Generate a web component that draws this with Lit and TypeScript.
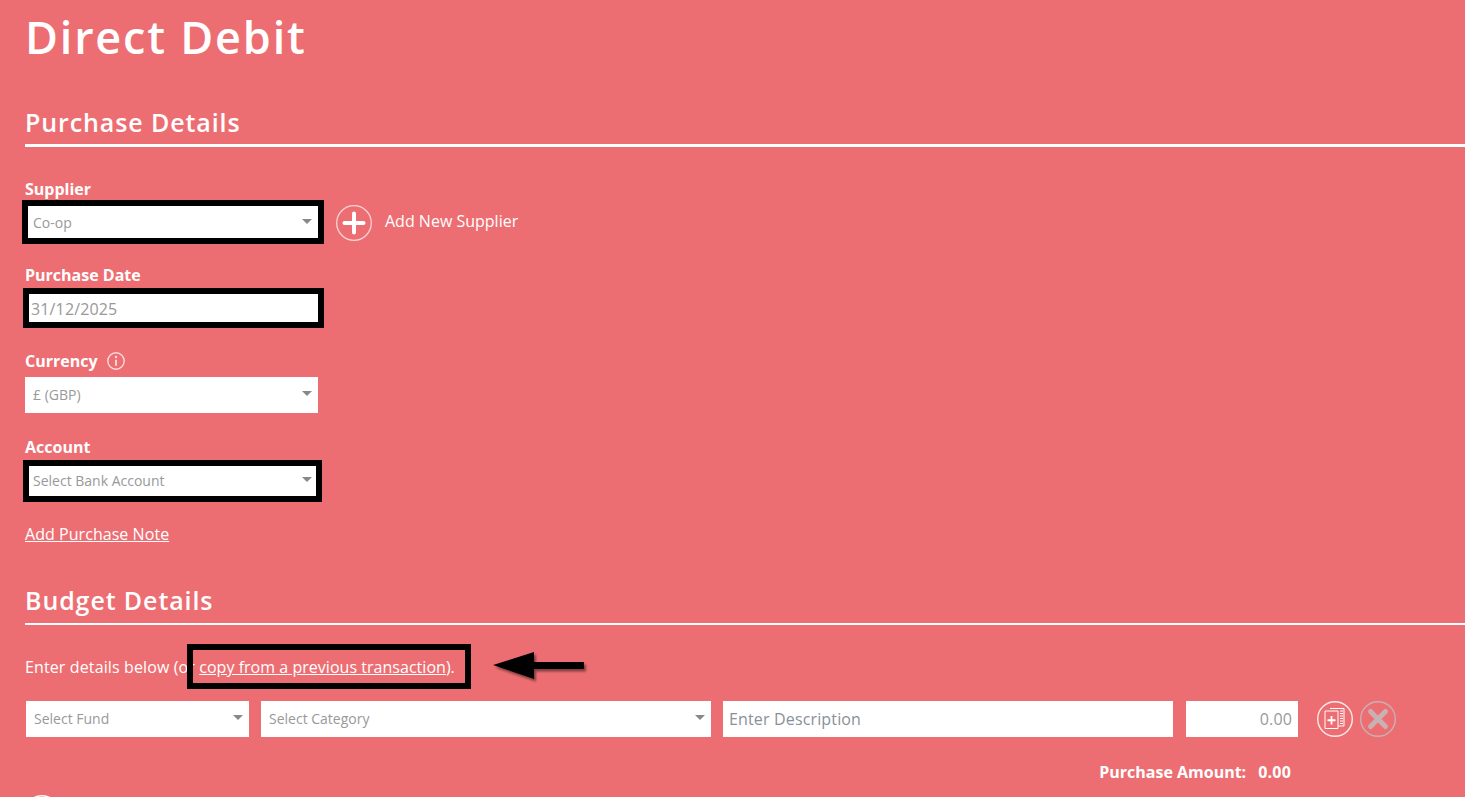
import { LitElement, html, css } from "lit";
import { customElement } from "lit/decorators.js";

@customElement("app-root")
export class AppRoot extends LitElement {
  static styles = css`
    :host { display: block; height: 797px; overflow: hidden; background: #ed6e72; color: #fff; font-family: "Open Sans", sans-serif; font-size: 16px; }
    .page { padding: 0 0 0 25px; position: relative; height: 797px; box-sizing: border-box; }
    h1 { margin: 0; padding-top: 6px; height: 83px; box-sizing: border-box; font-size: 45px; line-height: 61px; font-weight: 600; letter-spacing: 1.8px; }
    h2 { margin: 0; font-size: 25px; line-height: 33px; font-weight: 600; letter-spacing: 0.9px; }
    .purchase { padding-top: 23px; }
    .purchase h2 { padding-bottom: 5px; }
    .budget h2 { padding-bottom: 6px; }
    .rule { height: 3px; background: #fff; }
    .rule.thin { height: 2px; }
    .fields { display: flex; flex-direction: column; gap: 14px; padding-top: 31px; }
    .group { display: flex; flex-direction: column; height: 72px; }
    label { display: flex; align-items: center; gap: 9px; height: 22px; font-size: 16px; line-height: 22px; font-weight: 700; margin-bottom: 5px; }
    .row { display: flex; align-items: center; }
    .select, .input { position: relative; box-sizing: border-box; height: 36px; background: #fff; color: #999; display: flex; align-items: center; flex: none; }
    .select { font-size: 14px; padding: 0 0 2px 8px; }
    .select::after { content: ""; position: absolute; right: 6px; top: 14px; border-left: 5px solid transparent; border-right: 5px solid transparent; border-top: 5px solid #888; }
    .input { font-size: 16px; padding-left: 6px; letter-spacing: 0.15px; }
    .w293 { width: 293px; }
    .mark { position: absolute; border: 6px solid #000; pointer-events: none; box-sizing: border-box; }
    .m-supplier { left: -3px; right: -6px; top: -5px; bottom: -3px; }
    .m-date { left: -2px; right: -6px; top: -3px; bottom: -1px; }
    .m-account { left: -2px; right: -4px; top: -3px; bottom: -3px; }
    .add { display: flex; align-items: center; margin-left: 18px; gap: 13px; font-size: 16px; height: 36px; }
    .add span { position: relative; top: -2px; }
    .note { display: block; margin-top: 15px; font-size: 16px; line-height: 22px; color: #fff; text-decoration: underline; letter-spacing: 0.05px; }
    .budget { padding-top: 39px; }
    .intro { position: relative; margin-top: 31px; font-size: 16px; line-height: 22px; white-space: nowrap; height: 22px; }
    .intro .lead { letter-spacing: 0.12px; }
    .intro a { color: #fff; text-decoration: underline; letter-spacing: 0.03px; }
    .m-copy { left: 162px; top: -12px; width: 284px; height: 45px; }
    .arrow { position: absolute; left: 468px; top: -6px; overflow: visible; }
    .lines { display: flex; align-items: center; margin-top: 23px; margin-left: 1px; }
    .fund { width: 223px; }
    .cat { width: 450px; margin-left: 12px; }
    .desc { width: 450px; margin-left: 12px; color: #8a9098; }
    .amt { width: 112px; margin-left: 13px; justify-content: flex-end; padding: 0 6px 0 0; }
    .icons { display: flex; gap: 7px; margin-left: 19px; }
    .total { display: flex; justify-content: flex-end; width: 1266px; gap: 12px; margin-top: 24px; font-size: 16px; line-height: 22px; font-weight: 700; white-space: nowrap; }
    .total .val { letter-spacing: 0.2px; }
    .peek { position: absolute; left: 24px; top: 795px; }
    svg { display: block; flex: none; }
  `;

  render() {
    return html`<div class="page">
      <h1>Direct Debit</h1>
      <section class="purchase">
        <h2>Purchase Details</h2>
        <div class="rule"></div>
        <div class="fields">
          <div class="group">
            <label>Supplier</label>
            <div class="row">
              <div class="select w293">Co-op<i class="mark m-supplier"></i></div>
              <div class="add">
                <svg width="36" height="36" viewBox="0 0 36 36"><circle cx="18" cy="18" r="17.3" fill="none" stroke="#fff" stroke-opacity=".7" stroke-width="1.3"/><path d="M18 8.500v19M8.500 18h19" stroke="#fff" stroke-width="4" stroke-linecap="round"/></svg>
                <span>Add New Supplier</span>
              </div>
            </div>
          </div>
          <div class="group">
            <label>Purchase Date</label>
            <div class="input w293">31/12/2025<i class="mark m-date"></i></div>
          </div>
          <div class="group">
            <label>Currency
              <svg width="18" height="18" viewBox="0 0 18 18"><circle cx="9" cy="9" r="8.200" fill="none" stroke="#fff" stroke-opacity=".75" stroke-width="1.400"/><circle cx="9" cy="5" r="1.200" fill="#fff" fill-opacity=".8"/><path d="M9 7.800v6" stroke="#fff" stroke-opacity=".8" stroke-width="1.800"/></svg>
            </label>
            <div class="select w293">£ (GBP)</div>
          </div>
          <div class="group">
            <label>Account</label>
            <div class="select w293">Select Bank Account<i class="mark m-account"></i></div>
          </div>
        </div>
        <a class="note">Add Purchase Note</a>
      </section>
      <section class="budget">
        <h2>Budget Details</h2>
        <div class="rule thin"></div>
        <div class="intro"><span class="lead">Enter details below (or </span><a>copy from a previous transaction</a>).
          <i class="mark m-copy"></i>
          <svg class="arrow" width="92" height="32" viewBox="0 0 92 32">
            <defs><filter id="s" x="-20%" y="-40%" width="140%" height="200%"><feDropShadow dx="2" dy="2.500" stdDeviation="1.300" flood-color="#000" flood-opacity=".45"/></filter></defs>
            <path d="M0 15L41 2V12H91v7H41V29z" fill="#000" filter="url(#s)"/>
          </svg>
        </div>
        <div class="lines">
          <div class="select fund">Select Fund</div>
          <div class="select cat">Select Category</div>
          <div class="input desc">Enter Description</div>
          <div class="input amt">0.00</div>
          <div class="icons">
            <svg width="36" height="36" viewBox="0 0 36 36"><circle cx="18" cy="18" r="17.3" fill="none" stroke="#fff" stroke-opacity=".85" stroke-width="1.400"/><path d="M13 7.500H27V25h-6" fill="none" stroke="#fff" stroke-width="1"/><path d="M23 10H26M23 12.500H26M23 15H26M23 17.500H26M23 20H26M23 22.500H26" stroke="#fff" stroke-width="1"/><path d="M8 10h13v17.500H8z" fill="#ed6e72" stroke="#fff" stroke-width="1"/><path d="M14.500 15v8.500M10.500 19.250h8" stroke="#fff" stroke-width="1.800"/></svg>
            <svg width="36" height="36" viewBox="0 0 36 36"><circle cx="18" cy="18" r="17.3" fill="none" stroke="#c9b0b2" stroke-width="1.400"/><path d="M10.500 10.500l15 15M25.500 10.500l-15 15" stroke="#c9b0b2" stroke-width="5" stroke-linecap="round"/></svg>
          </div>
        </div>
        <div class="total"><span>Purchase Amount:</span><span class="val">0.00</span></div>
      </section>
      <svg class="peek" width="36" height="4" viewBox="0 0 36 4"><circle cx="18" cy="18" r="17.3" fill="none" stroke="#fff" stroke-width="1.400"/></svg>
    </div>`;
  }
}
